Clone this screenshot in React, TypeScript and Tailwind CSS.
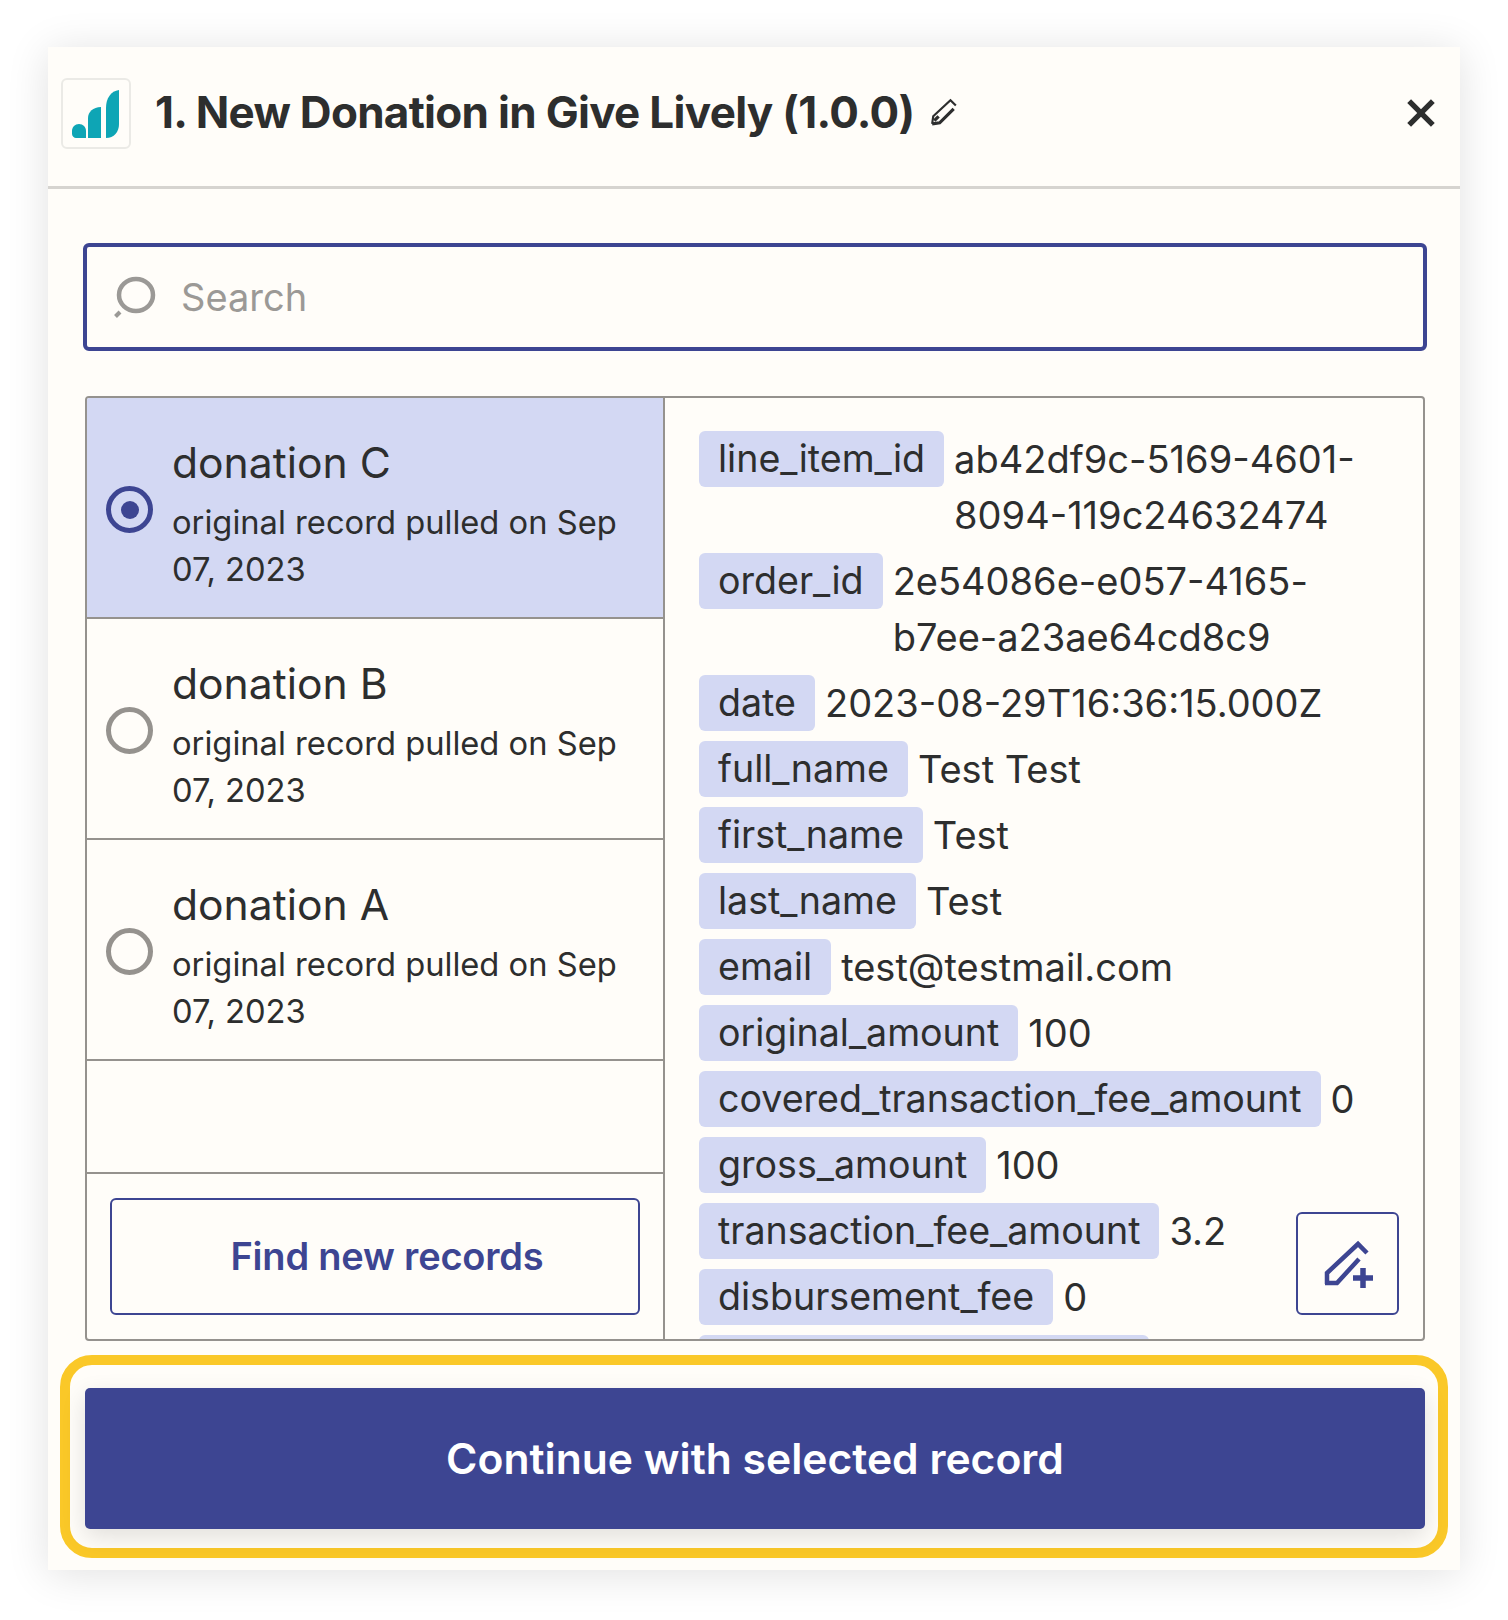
const records = [
  { name: "donation C", selected: true },
  { name: "donation B", selected: false },
  { name: "donation A", selected: false },
];

const fields: [string, string][] = [
  ["line_item_id", "ab42df9c-5169-4601-8094-119c24632474"],
  ["order_id", "2e54086e-e057-4165-b7ee-a23ae64cd8c9"],
  ["date", "2023-08-29T16:36:15.000Z"],
  ["full_name", "Test Test"],
  ["first_name", "Test"],
  ["last_name", "Test"],
  ["email", "test@testmail.com"],
  ["original_amount", "100"],
  ["covered_transaction_fee_amount", "0"],
  ["gross_amount", "100"],
  ["transaction_fee_amount", "3.2"],
  ["disbursement_fee", "0"],
];

export default function App() {
  return (
    <div className="min-h-screen bg-white pl-[48px] pt-[47px] font-['Inter',sans-serif] text-[#2d2e2e]">
      <div className="flex h-[1523px] w-[1412px] flex-col bg-[#fffdf9] shadow-[0_4px_40px_rgba(0,0,0,0.12)]">
        {/* Header */}
        <header className="flex h-[142px] shrink-0 items-center border-b-[3px] border-[#d6d4d0] pb-[10px] pl-[13px] pr-[25px]">
          <div className="mt-[4px] grid h-[71px] w-[70px] place-items-center rounded-[6px] border-[2px] border-[#ebeae6]">
            <svg width="48" height="48" viewBox="0 0 48 48" fill="#0ea5b5">
              <path d="M0 41c0-4 3-7 7-7s7 3 7 7v7H4c-2 0-4-2-4-4z" />
              <path d="M16 48V28c0-6 5-11 13-11v31z" />
              <path d="M34 48V18C34 8 39 1 47 0v34c0 8-5 14-13 14z" />
            </svg>
          </div>
          <h1 className="ml-[24px] text-[44px] font-bold leading-none tracking-[-0.7px]">1. New Donation in Give Lively (1.0.0)</h1>
          <svg className="ml-[16px]" width="28" height="28" viewBox="0 0 26 26" fill="none" stroke="#2d2e2e">
            <path d="M2 24l1-7L19 2l5 5" strokeWidth="2" />
            <path d="M2 24l7-1L22 10" strokeWidth="3" />
            <path d="M4 21l4-4" strokeWidth="3" />
          </svg>
          <svg className="ml-auto mt-[2px]" width="28" height="28" viewBox="0 0 26 26" stroke="#2d2e2e" strokeWidth="5">
            <path d="M2 2l22 22M24 2L2 24" />
          </svg>
        </header>

        <div className="flex flex-1 flex-col pl-[37px] pr-[35px]">
          {/* Search */}
          <div className="-ml-[2px] -mr-[2px] mt-[54px] flex h-[108px] shrink-0 items-center rounded-[6px] border-[4px] border-[#3d4592] pl-[26px]">
            <svg width="44" height="44" viewBox="0 0 44 44" fill="none" stroke="#9b9996">
              <ellipse cx="23" cy="20" rx="17" ry="16" strokeWidth="4.5" />
              <path d="M2.5 41.5L7 37" strokeWidth="4" />
            </svg>
            <span className="ml-[24px] text-[38px] text-[#9b9996]">Search</span>
          </div>

          {/* Panels */}
          <div className="mt-[45px] flex h-[945px] shrink-0 overflow-hidden rounded-[4px] border-[2px] border-[#95928e]">
            <div className="flex w-[578px] shrink-0 flex-col border-r-[2px] border-[#95928e]">
              {records.map((r) => (
                <div
                  key={r.name}
                  className={`flex h-[221px] shrink-0 items-center border-b-[2px] border-[#95928e] pl-[19px] ${r.selected ? "bg-[#d3d8f3]" : ""}`}
                >
                  <span
                    className={`mt-[4px] grid h-[47px] w-[47px] shrink-0 place-items-center rounded-full border-[5px] ${r.selected ? "border-[#3d4592]" : "border-[#95928e]"}`}
                  >
                    {r.selected && <span className="h-[18px] w-[18px] rounded-full bg-[#3d4592]" />}
                  </span>
                  <div className="ml-[19px] pt-[12px]">
                    <div className="text-[42.6px] leading-[56px]">{r.name}</div>
                    <div className="mt-[8px] w-[460px] text-[32.7px] leading-[47px]">original record pulled on Sep 07, 2023</div>
                  </div>
                </div>
              ))}
              <div className="h-[113px] shrink-0 border-b-[2px] border-[#95928e]" />
              <div className="flex-1 px-[23px] pt-[24px]">
                <button
                  type="button"
                  className="h-[117px] w-full rounded-[6px] border-[2px] border-[#3d4592] pl-[24px] text-[38px] font-semibold tracking-[-0.2px] text-[#3d4592]"
                >
                  Find new records
                </button>
              </div>
            </div>

            <div className="relative min-w-0 flex-1 overflow-hidden pl-[34px] pr-[40px] pt-[33px]">
              <div className="flex flex-col gap-[10px]">
                {fields.map(([k, v]) => (
                  <div key={k} className="flex items-start gap-[10px]">
                    <span className="shrink-0 rounded-[6px] bg-[#d3d8f3] px-[19px] text-[37.6px] leading-[56px]">{k}</span>
                    <span className="min-w-0 text-[38px] leading-[56px] [overflow-wrap:anywhere]">{v}</span>
                  </div>
                ))}
                {/* next row, only its top edge shows above the panel bottom */}
                <div className="h-[56px] w-[450px] shrink-0 rounded-[6px] bg-[#d3d8f3]" />
              </div>
              <button
                type="button"
                className="absolute bottom-[24px] right-[24px] grid h-[103px] w-[103px] place-items-center rounded-[6px] border-[2px] border-[#3d4592] bg-[#fffdf9]"
              >
                <svg width="50" height="50" viewBox="0 0 50 50" fill="none" stroke="#3d4592">
                  <path d="M4 45V34L35 5l9 9" strokeWidth="4.5" />
                  <path d="M2 44h12l22-24" strokeWidth="4.5" />
                  <path d="M40 29v20M30 39h20" strokeWidth="5.5" />
                </svg>
              </button>
            </div>
          </div>

          {/* Continue */}
          <div className="-ml-[25px] -mr-[23px] mt-[14px] flex h-[203px] shrink-0 items-center rounded-[32px] border-[10px] border-[#fac828] pb-0 pl-[15px] pr-[13px] pt-[4px]">
            <button
              type="button"
              className="h-[141px] w-full rounded-[5px] bg-[#3d4592] text-[42.6px] font-semibold text-white shadow-[0_8px_24px_rgba(0,0,0,0.12)]"
            >
              Continue with selected record
            </button>
          </div>
        </div>
      </div>
    </div>
  );
}
